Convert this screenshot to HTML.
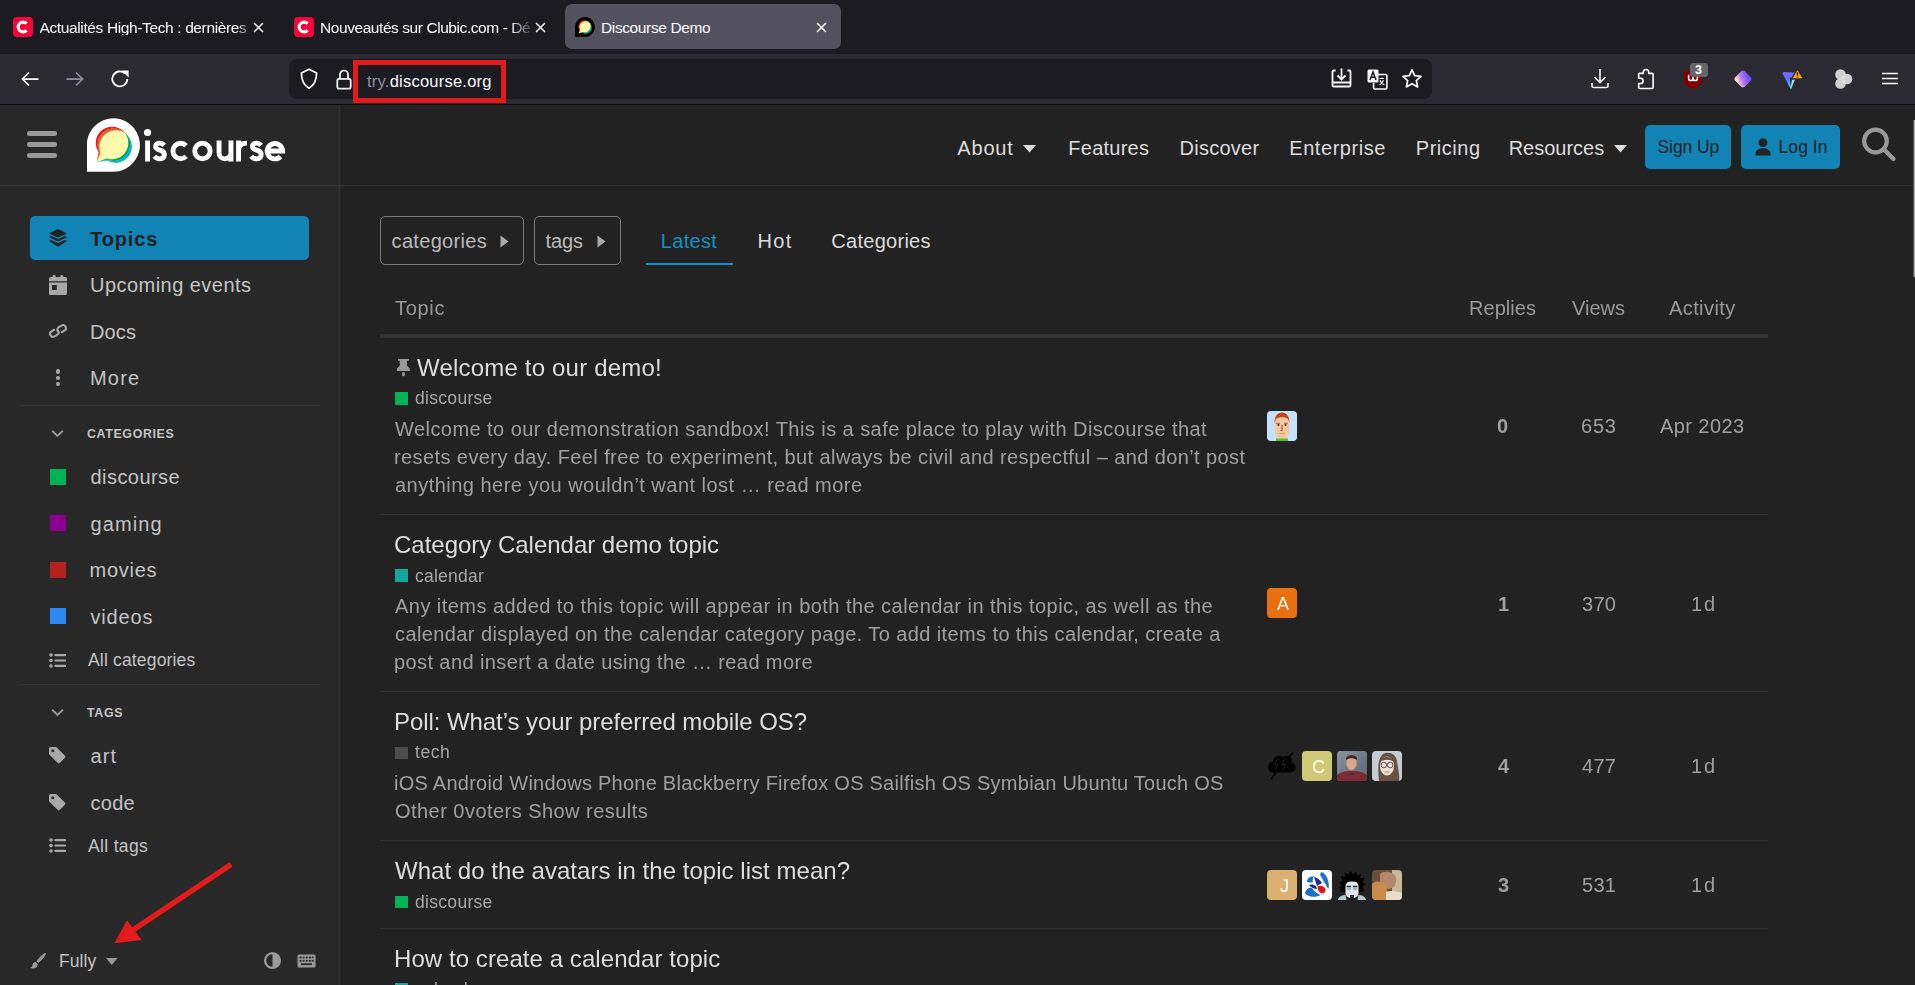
<!DOCTYPE html>
<html><head><meta charset="utf-8"><title>Discourse Demo</title>
<style>
html,body{margin:0;padding:0;}
body{width:1915px;height:985px;overflow:hidden;position:relative;background:#222;font-family:"Liberation Sans",sans-serif;}
svg{overflow:visible}
</style></head><body>
<div style="position:absolute;left:0px;top:0px;width:1915px;height:54px;background:#1c1b22;border-radius:0px;"></div>
<div style="position:absolute;left:0px;top:54px;width:1915px;height:50px;background:#2b2a33;border-radius:0px;"></div>
<div style="position:absolute;left:0px;top:104px;width:1915px;height:1px;background:#0c0c0d;border-radius:0px;"></div>
<div style="position:absolute;left:565px;top:4px;width:276px;height:45px;background:#53515e;border-radius:7px;"></div>
<svg style="position:absolute;left:13px;top:17px;" width="20" height="20" viewBox="0 0 20 20"><rect width="20" height="20" rx="4" fill="#f5053a"/><path d="M13.6 6.6 A4.9 4.9 0 1 0 13.6 13.4" fill="none" stroke="#fff" stroke-width="3.1"/></svg>
<svg style="position:absolute;left:294px;top:17px;" width="20" height="20" viewBox="0 0 20 20"><rect width="20" height="20" rx="4" fill="#f5053a"/><path d="M13.6 6.6 A4.9 4.9 0 1 0 13.6 13.4" fill="none" stroke="#fff" stroke-width="3.1"/></svg>
<div style="position:absolute;left:39.50px;top:19.87px;font-size:15.5px;line-height:15.5px;font-weight:400;color:#fbfbfe;letter-spacing:-0.373px;white-space:nowrap;-webkit-mask-image:linear-gradient(90deg,#000 0,#000 196px,rgba(0,0,0,0.25) 210px);">Actualités High-Tech : dernières</div>
<div style="position:absolute;left:320.00px;top:19.87px;font-size:15.5px;line-height:15.5px;font-weight:400;color:#fbfbfe;letter-spacing:-0.431px;white-space:nowrap;-webkit-mask-image:linear-gradient(90deg,#000 0,#000 190px,rgba(0,0,0,0.15) 212px);">Nouveautés sur Clubic.com - Dé</div>
<div style="position:absolute;left:601.00px;top:19.87px;font-size:15.5px;line-height:15.5px;font-weight:400;color:#fbfbfe;letter-spacing:-0.380px;white-space:nowrap;">Discourse Demo</div>
<svg style="position:absolute;left:253px;top:21.5px;" width="11" height="11" viewBox="0 0 11 11"><path d="M1 1L10 10M10 1L1 10" stroke="#fbfbfe" stroke-width="1.5" fill="none"/></svg>
<svg style="position:absolute;left:535px;top:21.5px;" width="11" height="11" viewBox="0 0 11 11"><path d="M1 1L10 10M10 1L1 10" stroke="#fbfbfe" stroke-width="1.5" fill="none"/></svg>
<svg style="position:absolute;left:816px;top:21.5px;" width="11" height="11" viewBox="0 0 11 11"><path d="M1 1L10 10M10 1L1 10" stroke="#fbfbfe" stroke-width="1.5" fill="none"/></svg>
<svg style="position:absolute;left:575px;top:17px;" width="20" height="20" viewBox="0 0 103 104"><path fill="#000" d="M51.87 0C23.71 0 0 22.83 0 51v52.81l51.86-.05c28.16 0 51-23.71 51-51.87S80 0 51.87 0z"/><path fill="#fff9ae" d="M52.37 19.74a31.62 31.62 0 0 0-27.79 46.67l-5.72 18.4 20.54-4.64a31.61 31.61 0 1 0 13-60.43z"/><path fill="#00aeef" d="M77.45 32.12a31.6 31.6 0 0 1-38.05 48L18.86 84.82l20.91-2.47A31.6 31.6 0 0 0 77.45 32.12z"/><path fill="#00a94f" d="M71.63 26.29A31.6 31.6 0 0 1 38.8 78L18.86 84.82 39.4 80.18a31.6 31.6 0 0 0 32.23-53.89z"/><path fill="#f15d22" d="M26.47 67.11a31.61 31.61 0 0 1 51-35A31.61 31.61 0 0 0 24.58 66.41l-5.72 18.4z"/><path fill="#e31b23" d="M24.58 66.41a31.61 31.61 0 0 1 47.05-40.12 31.61 31.61 0 0 0-49 39.63l-3.76 18.9z"/></svg>
<svg style="position:absolute;left:20px;top:70px;" width="20" height="18" viewBox="0 0 20 18"><path d="M18.5 9H2.5M9 2.5L2.5 9L9 15.5" stroke="#fbfbfe" stroke-width="1.75" fill="none"/></svg>
<svg style="position:absolute;left:65px;top:70px;" width="20" height="18" viewBox="0 0 20 18"><path d="M1.5 9H17.5M11 2.5L17.5 9L11 15.5" stroke="#8f8f9d" stroke-width="1.75" fill="none"/></svg>
<svg style="position:absolute;left:110px;top:69px;" width="20" height="20" viewBox="0 0 20 20"><path d="M17.3 10A7.5 7.5 0 1 1 14.8 4.3" stroke="#fbfbfe" stroke-width="1.8" fill="none"/><path d="M11.6 1.6H18.6V8.6Z" fill="#fbfbfe"/></svg>
<div style="position:absolute;left:289px;top:59px;width:1143px;height:40px;background:#1c1b22;border-radius:8px;"></div>
<svg style="position:absolute;left:299px;top:68px;" width="20" height="22" viewBox="0 0 20 22"><path d="M10 1.3L17.6 4.9C17.6 12 15.2 17 10 20.3C4.8 17 2.4 12 2.4 4.9Z" stroke="#fbfbfe" stroke-width="1.7" fill="none" stroke-linejoin="round"/></svg>
<svg style="position:absolute;left:335px;top:68px;" width="18" height="22" viewBox="0 0 18 22"><path d="M5 10.5V6.5A4 4 0 0 1 13 6.5V10.5" stroke="#fbfbfe" stroke-width="1.7" fill="none"/><rect x="2.3" y="10.9" width="13.4" height="9.8" rx="2" stroke="#fbfbfe" stroke-width="1.7" fill="none"/></svg>
<div style="position:absolute;left:367.00px;top:72.53px;font-size:16.5px;line-height:16.5px;font-weight:400;color:#fbfbfe;letter-spacing:0.234px;white-space:nowrap;"><span style="color:#8f8f9d">try.</span>discourse.org</div>
<div style="position:absolute;left:353px;top:60px;width:143px;height:33px;border:5px solid #e41b1b;"></div>
<svg style="position:absolute;left:1331px;top:68px;" width="22" height="21" viewBox="0 0 22 21"><path d="M4.5 2.5H2.8A1.3 1.3 0 0 0 1.5 3.8V17.2A1.3 1.3 0 0 0 2.8 18.5H18.2A1.3 1.3 0 0 0 19.5 17.2V3.8A1.3 1.3 0 0 0 18.2 2.5H16.5M1.5 14.5H19.5M10.5 0.5V11M6.5 7.5L10.5 11.5L14.5 7.5" stroke="#fbfbfe" stroke-width="1.8" fill="none"/></svg>
<svg style="position:absolute;left:1367px;top:69px;" width="21" height="21" viewBox="0 0 21 21"><rect x="0.5" y="0.5" width="11" height="13" rx="1.5" fill="#fbfbfe"/><path d="M3 11L6 3L9 11M4.2 8.2H7.8" stroke="#1c1b22" stroke-width="1.5" fill="none"/><path d="M10.5 5.5H18.7A1.2 1.2 0 0 1 19.9 6.7V18.8A1.2 1.2 0 0 1 18.7 20H7.8A1.2 1.2 0 0 1 6.6 18.8V14" stroke="#fbfbfe" stroke-width="1.6" fill="none"/><path d="M12.5 9.5H17M14.8 8.5V10M13 11.2C14 14 15.5 15 17.3 15.5M16.5 11.2C15.8 13.5 14.5 15 12.5 16" stroke="#fbfbfe" stroke-width="1.1" fill="none"/></svg>
<svg style="position:absolute;left:1401px;top:68px;" width="22" height="22" viewBox="0 0 22 22"><path d="M11 1.8L13.7 7.6L20 8.3L15.3 12.6L16.6 18.9L11 15.7L5.4 18.9L6.7 12.6L2 8.3L8.3 7.6Z" stroke="#fbfbfe" stroke-width="1.7" fill="none" stroke-linejoin="round"/></svg>
<svg style="position:absolute;left:1590px;top:68px;" width="20" height="21" viewBox="0 0 20 21"><path d="M10 1V14.5M4.5 9L10 14.5L15.5 9M2 15V18A1.5 1.5 0 0 0 3.5 19.5H16.5A1.5 1.5 0 0 0 18 18V15" stroke="#fbfbfe" stroke-width="1.6" fill="none"/></svg>
<svg style="position:absolute;left:1636px;top:68px;" width="20" height="22" viewBox="0 0 20 22"><path d="M7.3 5.4V4.2A2.7 2.7 0 0 1 12.7 4.2V5.4H16.2A0.9 0.9 0 0 1 17.1 6.3V19.6A0.9 0.9 0 0 1 16.2 20.5H3.6A0.9 0.9 0 0 1 2.7 19.6V15.5H4.5A2.6 2.6 0 0 0 4.5 10.3H2.7V6.3A0.9 0.9 0 0 1 3.6 5.4Z" stroke="#fbfbfe" stroke-width="1.6" fill="none" stroke-linejoin="round"/></svg>
<svg style="position:absolute;left:1683px;top:70px;" width="20" height="20" viewBox="0 0 20 20"><path d="M1 1.5L10 0.8L19 1.5V10.5C19 14 15.5 17 10 19C4.5 17 1 14 1 10.5Z" fill="#800000"/><path d="M5.6 4.8V8.4A2.2 2.2 0 0 0 10 8.4V7M10 8.4A2.2 2.2 0 0 0 14.4 8.4V6.5" stroke="#fff" stroke-width="1.5" fill="none"/></svg>
<div style="position:absolute;left:1690px;top:63px;width:18px;height:14px;background:#666;border-radius:3px;"></div>
<div style="position:absolute;left:1695.00px;top:64.41px;font-size:12.5px;line-height:12.5px;font-weight:700;color:#fff;letter-spacing:0.000px;white-space:nowrap;">3</div>
<svg style="position:absolute;left:1732px;top:68px;" width="22" height="22" viewBox="0 0 22 22"><defs><linearGradient id="gd" x1="0.7" y1="0.1" x2="0.3" y2="0.95"><stop offset="0" stop-color="#6e4cff"/><stop offset="0.55" stop-color="#b47be8"/><stop offset="1" stop-color="#ffe2cc"/></linearGradient></defs><rect x="4.2" y="4.2" width="13.6" height="13.6" rx="3" transform="rotate(45 11 11)" fill="url(#gd)"/></svg>
<svg style="position:absolute;left:1781px;top:68px;" width="24" height="22" viewBox="0 0 24 22"><defs><linearGradient id="gt" x1="0" y1="0" x2="0.35" y2="1"><stop offset="0" stop-color="#8a5cff"/><stop offset="0.55" stop-color="#4a7dff"/><stop offset="1" stop-color="#7fe9f5"/></linearGradient></defs><path d="M1.5 5.5Q1.3 4 3 4L16.5 4.8L10 21.5Z" fill="url(#gt)"/><path d="M10.8 10.5L14.5 10.8L9.5 20.5Z" fill="#b8f3f8" opacity="0.75"/><path d="M8.8 9.5L11.2 10.3L9.7 19.5Z" fill="#2b2a33"/><path d="M16.5 0.8L22.6 11H10.4Z" fill="#ff9f00" stroke="#2b2a33" stroke-width="1.3" stroke-linejoin="round"/><path d="M16.5 4.2V7.8M16.5 8.8V9.6" stroke="#2b2a33" stroke-width="1.3"/></svg>
<svg style="position:absolute;left:1833px;top:68px;" width="21" height="22" viewBox="0 0 21 22"><circle cx="7.5" cy="6.5" r="5.3" fill="#e0e0e0" opacity="0.92"/><circle cx="14" cy="11" r="5.3" fill="#e0e0e0" opacity="0.92"/><circle cx="7.5" cy="15.5" r="5.3" fill="#e0e0e0" opacity="0.92"/></svg>
<svg style="position:absolute;left:1881px;top:70px;" width="18" height="16" viewBox="0 0 18 16"><path d="M1 3.4H17M1 8.5H17M1 13.6H17" stroke="#fbfbfe" stroke-width="1.5"/></svg>
<div style="position:absolute;left:0px;top:105px;width:339px;height:880px;background:#282828;border-radius:0px;"></div>
<div style="position:absolute;left:339px;top:105px;width:1px;height:880px;background:#333333;border-radius:0px;"></div>
<div style="position:absolute;left:340px;top:105px;width:1575px;height:880px;background:#222222;border-radius:0px;"></div>
<div style="position:absolute;left:0px;top:185px;width:1913px;height:1px;background:#333333;border-radius:0px;"></div>
<div style="position:absolute;left:1913px;top:120px;width:1px;height:157px;background:#555;border-radius:0px;"></div>
<div style="position:absolute;left:1914px;top:120px;width:1px;height:157px;background:#a8a8a8;border-radius:0px;"></div>
<div style="position:absolute;left:26.6px;top:131.2px;width:30.6px;height:4.4px;background:#999;border-radius:2.2px;"></div>
<div style="position:absolute;left:26.6px;top:142.2px;width:30.6px;height:4.4px;background:#999;border-radius:2.2px;"></div>
<div style="position:absolute;left:26.6px;top:153.2px;width:30.6px;height:4.4px;background:#999;border-radius:2.2px;"></div>
<svg style="position:absolute;left:86.7px;top:117.7px;" width="53" height="54" viewBox="0 0 103 104"><path fill="#ffffff" d="M51.87 0C23.71 0 0 22.83 0 51v52.81l51.86-.05c28.16 0 51-23.71 51-51.87S80 0 51.87 0z"/><path fill="#fff9ae" d="M52.37 19.74a31.62 31.62 0 0 0-27.79 46.67l-5.72 18.4 20.54-4.64a31.61 31.61 0 1 0 13-60.43z"/><path fill="#00aeef" d="M77.45 32.12a31.6 31.6 0 0 1-38.05 48L18.86 84.82l20.91-2.47A31.6 31.6 0 0 0 77.45 32.12z"/><path fill="#00a94f" d="M71.63 26.29A31.6 31.6 0 0 1 38.8 78L18.86 84.82 39.4 80.18a31.6 31.6 0 0 0 32.23-53.89z"/><path fill="#f15d22" d="M26.47 67.11a31.61 31.61 0 0 1 51-35A31.61 31.61 0 0 0 24.58 66.41l-5.72 18.4z"/><path fill="#e31b23" d="M24.58 66.41a31.61 31.61 0 0 1 47.05-40.12 31.61 31.61 0 0 0-49 39.63l-3.76 18.9z"/></svg>
<svg style="position:absolute;left:140px;top:125px;" width="150" height="42" viewBox="0 0 150 42"><g transform="translate(-140 -125)" fill="none" stroke="#fff" stroke-width="4.9"><path d="M147.55 140.5V161.5"/><path d="M164.2 145.4C163 143.9 161.5 143.15 159.8 143.15C157.3 143.15 155.6 144.4 155.6 146.4C155.6 148.6 157.5 149.4 160 150.2C162.7 151 164.4 152.3 164.4 154.7C164.4 157.3 162.3 158.85 159.6 158.85C157.4 158.85 155.7 157.9 154.4 156.3"/><path d="M186.1 145.6A7.7 7.7 0 1 0 186.1 156.4"/><circle cx="202.45" cy="151" r="7.7"/><path d="M219.05 140.5V152.9A5.95 5.95 0 0 0 230.95 152.9V140.5M230.95 150V161.5"/><path d="M238.55 140.5V161.5M238.55 150.5C238.55 145.5 241.5 143.1 246.9 143.1"/><path d="M261 145.4C259.8 143.9 258.3 143.15 256.6 143.15C254.1 143.15 252.4 144.4 252.4 146.4C252.4 148.6 254.3 149.4 256.8 150.2C259.5 151 261.2 152.3 261.2 154.7C261.2 157.3 259.1 158.85 256.4 158.85C254.2 158.85 252.5 157.9 251.2 156.3"/><path d="M267.2 151H282.6A7.7 7.7 0 1 0 280.5 156.5"/></g><circle cx="7.55" cy="7.5" r="3.6" fill="#fff"/></svg>
<div style="position:absolute;left:957.30px;top:137.86px;font-size:20px;line-height:20px;font-weight:400;color:#dddddd;letter-spacing:0.823px;white-space:nowrap;">About</div>
<svg style="position:absolute;left:1022.5px;top:144.5px;" width="13" height="7.5" viewBox="0 0 13 7.5"><path d="M0 0H13L6.5 7.5Z" fill="#ddd"/></svg>
<div style="position:absolute;left:1068.30px;top:137.86px;font-size:20px;line-height:20px;font-weight:400;color:#dddddd;letter-spacing:0.253px;white-space:nowrap;">Features</div>
<div style="position:absolute;left:1179.60px;top:137.86px;font-size:20px;line-height:20px;font-weight:400;color:#dddddd;letter-spacing:0.252px;white-space:nowrap;">Discover</div>
<div style="position:absolute;left:1289.30px;top:137.86px;font-size:20px;line-height:20px;font-weight:400;color:#dddddd;letter-spacing:0.552px;white-space:nowrap;">Enterprise</div>
<div style="position:absolute;left:1415.80px;top:137.86px;font-size:20px;line-height:20px;font-weight:400;color:#dddddd;letter-spacing:0.515px;white-space:nowrap;">Pricing</div>
<div style="position:absolute;left:1508.70px;top:137.86px;font-size:20px;line-height:20px;font-weight:400;color:#dddddd;letter-spacing:-0.012px;white-space:nowrap;">Resources</div>
<svg style="position:absolute;left:1613.5px;top:144.5px;" width="13" height="7.5" viewBox="0 0 13 7.5"><path d="M0 0H13L6.5 7.5Z" fill="#ddd"/></svg>
<div style="position:absolute;left:1645px;top:125px;width:86px;height:44px;background:#1183b5;border-radius:5px;"></div>
<div style="position:absolute;left:1657.50px;top:139.18px;font-size:17.5px;line-height:17.5px;font-weight:400;color:#222;letter-spacing:-0.088px;white-space:nowrap;">Sign Up</div>
<div style="position:absolute;left:1741px;top:125px;width:99px;height:44px;background:#1183b5;border-radius:5px;"></div>
<svg style="position:absolute;left:1755px;top:138px;" width="16" height="18" viewBox="0 0 16 18"><circle cx="8" cy="4.6" r="4.4" fill="#222"/><path d="M0.3 17.5C0.3 12.5 3 10.3 8 10.3S15.7 12.5 15.7 17.5Z" fill="#222"/></svg>
<div style="position:absolute;left:1778.60px;top:139.18px;font-size:17.5px;line-height:17.5px;font-weight:400;color:#222;letter-spacing:0.036px;white-space:nowrap;">Log In</div>
<svg style="position:absolute;left:1860px;top:126px;" width="38" height="38" viewBox="0 0 38 38"><circle cx="15.5" cy="15" r="11.3" stroke="#999" stroke-width="4.2" fill="none"/><path d="M24 23.5L33.5 33" stroke="#999" stroke-width="4.4" stroke-linecap="round"/></svg>
<div style="position:absolute;left:30px;top:216px;width:279px;height:44px;background:#1183b5;border-radius:5px;"></div>
<svg style="position:absolute;left:49px;top:228px;" width="18" height="20" viewBox="0 0 18 20"><path d="M9 1L18 5.4L9 9.6L0 5.4Z" fill="#222"/><path d="M0 9L2.3 7.9L9 11.1L15.7 7.9L18 9L9 13.6Z" fill="#222"/><path d="M0 13L2.3 11.9L9 15.2L15.7 11.9L18 13L9 18.7Z" fill="#222"/></svg>
<div style="position:absolute;left:90.20px;top:229.06px;font-size:20px;line-height:20px;font-weight:700;color:#222;letter-spacing:0.831px;white-space:nowrap;">Topics</div>
<svg style="position:absolute;left:49px;top:274px;" width="18" height="22" viewBox="0 0 18 22"><path d="M0 5A2 2 0 0 1 2 3H16A2 2 0 0 1 18 5V7.2H0Z M0 8.6H18V19.5A1.5 1.5 0 0 1 16.5 21H1.5A1.5 1.5 0 0 1 0 19.5Z" fill="#a9a9a9"/><rect x="3.6" y="1" width="2.9" height="3.5" rx="1.2" fill="#a9a9a9"/><rect x="11.3" y="1" width="2.9" height="3.5" rx="1.2" fill="#a9a9a9"/><rect x="3" y="11" width="4.8" height="5" fill="#282828"/></svg>
<div style="position:absolute;left:90.00px;top:274.56px;font-size:20px;line-height:20px;font-weight:400;color:#c4c4c4;letter-spacing:0.463px;white-space:nowrap;">Upcoming events</div>
<svg style="position:absolute;left:48px;top:323px;" width="20" height="16" viewBox="0 0 20 16"><g transform="translate(10 8) scale(1.1) translate(-10 -8) rotate(-30 10 8)" stroke="#a9a9a9" stroke-width="1.85" fill="none" stroke-linecap="round"><path d="M7.6 5.3H4.8A2.7 2.7 0 0 0 4.8 10.7H7.6A2.7 2.7 0 0 0 10.3 8"/><path d="M12.4 10.7H15.2A2.7 2.7 0 0 0 15.2 5.3H12.4A2.7 2.7 0 0 0 9.7 8"/></g></svg>
<div style="position:absolute;left:90.00px;top:321.76px;font-size:20px;line-height:20px;font-weight:400;color:#c4c4c4;letter-spacing:0.145px;white-space:nowrap;">Docs</div>
<div style="position:absolute;left:55.5px;top:369.2px;width:4.6px;height:4.6px;border-radius:50%;background:#a9a9a9"></div>
<div style="position:absolute;left:55.5px;top:375.5px;width:4.6px;height:4.6px;border-radius:50%;background:#a9a9a9"></div>
<div style="position:absolute;left:55.5px;top:381.8px;width:4.6px;height:4.6px;border-radius:50%;background:#a9a9a9"></div>
<div style="position:absolute;left:90.00px;top:368.26px;font-size:20px;line-height:20px;font-weight:400;color:#c4c4c4;letter-spacing:1.186px;white-space:nowrap;">More</div>
<div style="position:absolute;left:20px;top:405px;width:300px;height:1px;background:#333;border-radius:0px;"></div>
<svg style="position:absolute;left:51px;top:428.5px;" width="13" height="9" viewBox="0 0 13 9"><path d="M1.2 1.8L6.5 7L11.8 1.8" stroke="#999" stroke-width="1.9" fill="none"/></svg>
<div style="position:absolute;left:87.00px;top:427.70px;font-size:12.4px;line-height:12.4px;font-weight:700;color:#c4c4c4;letter-spacing:0.640px;white-space:nowrap;">CATEGORIES</div>
<div style="position:absolute;left:50px;top:469px;width:16px;height:16px;background:#00b355;border-radius:0px;"></div>
<div style="position:absolute;left:90.50px;top:467.06px;font-size:20px;line-height:20px;font-weight:400;color:#c4c4c4;letter-spacing:0.441px;white-space:nowrap;">discourse</div>
<div style="position:absolute;left:50px;top:515px;width:16px;height:16px;background:#8c0090;border-radius:0px;"></div>
<div style="position:absolute;left:90.50px;top:514.06px;font-size:20px;line-height:20px;font-weight:400;color:#c4c4c4;letter-spacing:1.105px;white-space:nowrap;">gaming</div>
<div style="position:absolute;left:50px;top:562px;width:16px;height:16px;background:#b3221f;border-radius:0px;"></div>
<div style="position:absolute;left:89.50px;top:560.06px;font-size:20px;line-height:20px;font-weight:400;color:#c4c4c4;letter-spacing:0.730px;white-space:nowrap;">movies</div>
<div style="position:absolute;left:50px;top:608px;width:16px;height:16px;background:#2a88f0;border-radius:0px;"></div>
<div style="position:absolute;left:90.50px;top:606.76px;font-size:20px;line-height:20px;font-weight:400;color:#c4c4c4;letter-spacing:0.838px;white-space:nowrap;">videos</div>
<svg style="position:absolute;left:49px;top:653px;" width="18" height="15" viewBox="0 0 18 15"><circle cx="2" cy="2" r="1.8" fill="#a9a9a9"/><circle cx="2" cy="7.5" r="1.8" fill="#a9a9a9"/><circle cx="2" cy="13" r="1.8" fill="#a9a9a9"/><rect x="5.5" y="1" width="11.5" height="2.2" rx="0.6" fill="#a9a9a9"/><rect x="5.5" y="6.4" width="11.5" height="2.2" rx="0.6" fill="#a9a9a9"/><rect x="5.5" y="11.8" width="11.5" height="2.2" rx="0.6" fill="#a9a9a9"/></svg>
<div style="position:absolute;left:88.00px;top:652.18px;font-size:17.5px;line-height:17.5px;font-weight:400;color:#c4c4c4;letter-spacing:0.169px;white-space:nowrap;">All categories</div>
<div style="position:absolute;left:20px;top:684px;width:300px;height:1px;background:#333;border-radius:0px;"></div>
<svg style="position:absolute;left:51px;top:707.5px;" width="13" height="9" viewBox="0 0 13 9"><path d="M1.2 1.8L6.5 7L11.8 1.8" stroke="#999" stroke-width="1.9" fill="none"/></svg>
<div style="position:absolute;left:87.00px;top:707.00px;font-size:12.4px;line-height:12.4px;font-weight:700;color:#c4c4c4;letter-spacing:0.689px;white-space:nowrap;">TAGS</div>
<svg style="position:absolute;left:48.3px;top:746px;" width="18" height="18" viewBox="0 0 18 18"><path d="M1 2.5A1.5 1.5 0 0 1 2.5 1H8.2L16.8 9.6A1.6 1.6 0 0 1 16.8 11.9L11.9 16.8A1.6 1.6 0 0 1 9.6 16.8L1 8.2Z" fill="#a9a9a9"/><circle cx="4.8" cy="4.8" r="1.5" fill="#282828"/></svg>
<div style="position:absolute;left:90.50px;top:746.26px;font-size:20px;line-height:20px;font-weight:400;color:#c4c4c4;letter-spacing:1.108px;white-space:nowrap;">art</div>
<svg style="position:absolute;left:48.3px;top:792.5px;" width="18" height="18" viewBox="0 0 18 18"><path d="M1 2.5A1.5 1.5 0 0 1 2.5 1H8.2L16.8 9.6A1.6 1.6 0 0 1 16.8 11.9L11.9 16.8A1.6 1.6 0 0 1 9.6 16.8L1 8.2Z" fill="#a9a9a9"/><circle cx="4.8" cy="4.8" r="1.5" fill="#282828"/></svg>
<div style="position:absolute;left:90.50px;top:793.06px;font-size:20px;line-height:20px;font-weight:400;color:#c4c4c4;letter-spacing:0.251px;white-space:nowrap;">code</div>
<svg style="position:absolute;left:49px;top:838px;" width="18" height="15" viewBox="0 0 18 15"><circle cx="2" cy="2" r="1.8" fill="#a9a9a9"/><circle cx="2" cy="7.5" r="1.8" fill="#a9a9a9"/><circle cx="2" cy="13" r="1.8" fill="#a9a9a9"/><rect x="5.5" y="1" width="11.5" height="2.2" rx="0.6" fill="#a9a9a9"/><rect x="5.5" y="6.4" width="11.5" height="2.2" rx="0.6" fill="#a9a9a9"/><rect x="5.5" y="11.8" width="11.5" height="2.2" rx="0.6" fill="#a9a9a9"/></svg>
<div style="position:absolute;left:88.00px;top:837.98px;font-size:17.5px;line-height:17.5px;font-weight:400;color:#c4c4c4;letter-spacing:0.337px;white-space:nowrap;">All tags</div>
<svg style="position:absolute;left:29px;top:952px;" width="18" height="17" viewBox="0 0 18 17"><path d="M16.8 1.2C15.5 0.4 10 5.5 7.5 9.3L9.2 11C13 8.2 17.8 2 16.8 1.2Z" fill="#999"/><path d="M6.8 10C4.2 10 3.6 12 3.4 13.6C3.2 15 2.2 15.6 1 15.8C3.5 17 8.5 16.6 8.8 12.2Z" fill="#999"/></svg>
<div style="position:absolute;left:59.00px;top:952.68px;font-size:17.5px;line-height:17.5px;font-weight:400;color:#c4c4c4;letter-spacing:0.100px;white-space:nowrap;">Fully</div>
<svg style="position:absolute;left:106px;top:958px;" width="12" height="7" viewBox="0 0 12 7"><path d="M0 0H11.5L5.75 7Z" fill="#999"/></svg>
<svg style="position:absolute;left:263px;top:951px;" width="19" height="19" viewBox="0 0 19 19"><circle cx="9.5" cy="9.5" r="7.4" stroke="#999" stroke-width="2.3" fill="none"/><path d="M9.5 2.1A7.4 7.4 0 0 1 9.5 16.9Z" fill="#999"/></svg>
<svg style="position:absolute;left:297px;top:954px;" width="19" height="14" viewBox="0 0 19 14"><rect x="0.5" y="0.5" width="18" height="13" rx="1.5" fill="#999"/><g fill="#282828"><rect x="2.5" y="2.6" width="2" height="1.8"/><rect x="5.6" y="2.6" width="2" height="1.8"/><rect x="8.7" y="2.6" width="2" height="1.8"/><rect x="11.8" y="2.6" width="2" height="1.8"/><rect x="14.6" y="2.6" width="2" height="1.8"/><rect x="2.5" y="5.9" width="2" height="1.8"/><rect x="5.6" y="5.9" width="2" height="1.8"/><rect x="8.7" y="5.9" width="2" height="1.8"/><rect x="11.8" y="5.9" width="2" height="1.8"/><rect x="14.6" y="5.9" width="2" height="1.8"/><rect x="4" y="9.3" width="11" height="1.8"/></g></svg>
<svg style="position:absolute;left:100px;top:855px;" width="140" height="95" viewBox="0 0 140 95"><path d="M131 9.5L30 77" stroke="#e41b1b" stroke-width="5.5" fill="none"/><path d="M14.4 88.2L27 65.2L41.7 85Z" fill="#e41b1b"/></svg>
<div style="position:absolute;left:380px;top:216px;width:142px;height:47px;border:1px solid #7a7a7a;border-radius:5px"></div>
<div style="position:absolute;left:391.60px;top:231.06px;font-size:20px;line-height:20px;font-weight:400;color:#bbbbbb;letter-spacing:0.314px;white-space:nowrap;">categories</div>
<svg style="position:absolute;left:500px;top:235px;" width="9" height="13" viewBox="0 0 9 13"><path d="M0.5 0.5L8.5 6.5L0.5 12.5Z" fill="#aaa"/></svg>
<div style="position:absolute;left:534px;top:216px;width:85px;height:47px;border:1px solid #7a7a7a;border-radius:5px"></div>
<div style="position:absolute;left:545.40px;top:231.06px;font-size:20px;line-height:20px;font-weight:400;color:#bbbbbb;letter-spacing:-0.068px;white-space:nowrap;">tags</div>
<svg style="position:absolute;left:597px;top:235px;" width="9" height="13" viewBox="0 0 9 13"><path d="M0.5 0.5L8.5 6.5L0.5 12.5Z" fill="#aaa"/></svg>
<div style="position:absolute;left:660.80px;top:231.16px;font-size:20px;line-height:20px;font-weight:400;color:#1a8fc3;letter-spacing:0.295px;white-space:nowrap;">Latest</div>
<div style="position:absolute;left:646px;top:262.5px;width:87px;height:2.6px;background:#1a8fc3;border-radius:0px;"></div>
<div style="position:absolute;left:757.40px;top:231.16px;font-size:20px;line-height:20px;font-weight:400;color:#dddddd;letter-spacing:1.417px;white-space:nowrap;">Hot</div>
<div style="position:absolute;left:831.30px;top:231.16px;font-size:20px;line-height:20px;font-weight:400;color:#dddddd;letter-spacing:0.276px;white-space:nowrap;">Categories</div>
<div style="position:absolute;left:395.00px;top:298.06px;font-size:20px;line-height:20px;font-weight:400;color:#999999;letter-spacing:0.678px;white-space:nowrap;will-change:transform;">Topic</div>
<div style="position:absolute;left:1469.00px;top:298.06px;font-size:20px;line-height:20px;font-weight:400;color:#999999;letter-spacing:0.050px;white-space:nowrap;will-change:transform;">Replies</div>
<div style="position:absolute;left:1572.40px;top:298.06px;font-size:20px;line-height:20px;font-weight:400;color:#999999;letter-spacing:-0.022px;white-space:nowrap;will-change:transform;">Views</div>
<div style="position:absolute;left:1669.00px;top:298.06px;font-size:20px;line-height:20px;font-weight:400;color:#999999;letter-spacing:0.409px;white-space:nowrap;will-change:transform;">Activity</div>
<div style="position:absolute;left:380px;top:334px;width:1388px;height:4px;background:#333;border-radius:0px;"></div>
<svg style="position:absolute;left:396px;top:359px;" width="15" height="18" viewBox="0 0 15 18"><path d="M2 0H12.9V1.8H11V6.8L13.8 9.6V12H0.9V9.6L3.8 6.8V1.8H2Z" fill="#999"/><rect x="6.1" y="12.9" width="2.7" height="4.3" rx="1.2" fill="#999"/></svg>
<div style="position:absolute;left:417.00px;top:355.68px;font-size:24px;line-height:24px;font-weight:400;color:#dddddd;letter-spacing:0.193px;white-space:nowrap;will-change:transform;">Welcome to our demo!</div>
<div style="position:absolute;left:395px;top:392px;width:13px;height:13px;background:#00b355;border-radius:0px;"></div>
<div style="position:absolute;left:414.50px;top:390.38px;font-size:17.5px;line-height:17.5px;font-weight:400;color:#a8a8a8;letter-spacing:0.305px;white-space:nowrap;will-change:transform;">discourse</div>
<div style="position:absolute;left:395.00px;top:419.06px;font-size:20px;line-height:20px;font-weight:400;color:#a0a0a0;letter-spacing:0.442px;white-space:nowrap;will-change:transform;">Welcome to our demonstration sandbox! This is a safe place to play with Discourse that</div>
<div style="position:absolute;left:394.00px;top:447.06px;font-size:20px;line-height:20px;font-weight:400;color:#a0a0a0;letter-spacing:0.405px;white-space:nowrap;will-change:transform;">resets every day. Feel free to experiment, but always be civil and respectful – and don’t post</div>
<div style="position:absolute;left:395.00px;top:475.06px;font-size:20px;line-height:20px;font-weight:400;color:#a0a0a0;letter-spacing:0.477px;white-space:nowrap;will-change:transform;">anything here you wouldn’t want lost … read more</div>
<div style="position:absolute;left:380px;top:513.5px;width:1388px;height:1px;background:#333;border-radius:0px;"></div>
<div style="position:absolute;left:394.30px;top:532.88px;font-size:24px;line-height:24px;font-weight:400;color:#dddddd;letter-spacing:-0.015px;white-space:nowrap;will-change:transform;">Category Calendar demo topic</div>
<div style="position:absolute;left:395px;top:569px;width:13px;height:13px;background:#12a89d;border-radius:0px;"></div>
<div style="position:absolute;left:414.50px;top:567.98px;font-size:17.5px;line-height:17.5px;font-weight:400;color:#a8a8a8;letter-spacing:0.243px;white-space:nowrap;will-change:transform;">calendar</div>
<div style="position:absolute;left:395.00px;top:596.06px;font-size:20px;line-height:20px;font-weight:400;color:#a0a0a0;letter-spacing:0.458px;white-space:nowrap;will-change:transform;">Any items added to this topic will appear in both the calendar in this topic, as well as the</div>
<div style="position:absolute;left:395.00px;top:624.06px;font-size:20px;line-height:20px;font-weight:400;color:#a0a0a0;letter-spacing:0.400px;white-space:nowrap;will-change:transform;">calendar displayed on the calendar category page. To add items to this calendar, create a</div>
<div style="position:absolute;left:394.00px;top:651.56px;font-size:20px;line-height:20px;font-weight:400;color:#a0a0a0;letter-spacing:0.402px;white-space:nowrap;will-change:transform;">post and insert a date using the … read more</div>
<div style="position:absolute;left:380px;top:691px;width:1388px;height:1px;background:#333;border-radius:0px;"></div>
<div style="position:absolute;left:394.00px;top:709.78px;font-size:24px;line-height:24px;font-weight:400;color:#dddddd;letter-spacing:-0.073px;white-space:nowrap;will-change:transform;">Poll: What’s your preferred mobile OS?</div>
<div style="position:absolute;left:395px;top:746.5px;width:13px;height:12px;background:#4d4d4d;border-radius:0px;"></div>
<div style="position:absolute;left:414.50px;top:744.48px;font-size:17.5px;line-height:17.5px;font-weight:400;color:#a8a8a8;letter-spacing:0.552px;white-space:nowrap;will-change:transform;">tech</div>
<div style="position:absolute;left:394.00px;top:773.06px;font-size:20px;line-height:20px;font-weight:400;color:#a0a0a0;letter-spacing:0.250px;white-space:nowrap;will-change:transform;">iOS Android Windows Phone Blackberry Firefox OS Sailfish OS Symbian Ubuntu Touch OS</div>
<div style="position:absolute;left:395.00px;top:800.86px;font-size:20px;line-height:20px;font-weight:400;color:#a0a0a0;letter-spacing:0.460px;white-space:nowrap;will-change:transform;">Other 0voters Show results</div>
<div style="position:absolute;left:380px;top:840px;width:1388px;height:1px;background:#333;border-radius:0px;"></div>
<div style="position:absolute;left:395.00px;top:858.98px;font-size:24px;line-height:24px;font-weight:400;color:#dddddd;letter-spacing:0.035px;white-space:nowrap;will-change:transform;">What do the avatars in the topic list mean?</div>
<div style="position:absolute;left:395px;top:895.5px;width:13px;height:12.5px;background:#00b355;border-radius:0px;"></div>
<div style="position:absolute;left:414.50px;top:893.98px;font-size:17.5px;line-height:17.5px;font-weight:400;color:#a8a8a8;letter-spacing:0.305px;white-space:nowrap;will-change:transform;">discourse</div>
<div style="position:absolute;left:380px;top:928px;width:1388px;height:1px;background:#333;border-radius:0px;"></div>
<div style="position:absolute;left:394.00px;top:946.68px;font-size:24px;line-height:24px;font-weight:400;color:#dddddd;letter-spacing:0.070px;white-space:nowrap;will-change:transform;">How to create a calendar topic</div>
<div style="position:absolute;left:395px;top:983px;width:13px;height:2px;background:#12a89d;border-radius:0px;"></div>
<div style="position:absolute;left:414.50px;top:981.48px;font-size:17.5px;line-height:17.5px;font-weight:400;color:#a8a8a8;letter-spacing:0.243px;white-space:nowrap;will-change:transform;">calendar</div>
<div style="position:absolute;left:1497.00px;top:416.36px;font-size:20px;line-height:20px;font-weight:700;color:#a0a0a0;letter-spacing:0.000px;white-space:nowrap;will-change:transform;">0</div>
<div style="position:absolute;left:1581.00px;top:416.36px;font-size:20px;line-height:20px;font-weight:400;color:#a0a0a0;letter-spacing:0.777px;white-space:nowrap;will-change:transform;">653</div>
<div style="position:absolute;left:1660.00px;top:416.36px;font-size:20px;line-height:20px;font-weight:400;color:#a0a0a0;letter-spacing:0.422px;white-space:nowrap;will-change:transform;">Apr 2023</div>
<div style="position:absolute;left:1497.60px;top:594.06px;font-size:20px;line-height:20px;font-weight:700;color:#a0a0a0;letter-spacing:0.000px;white-space:nowrap;will-change:transform;">1</div>
<div style="position:absolute;left:1582.00px;top:594.06px;font-size:20px;line-height:20px;font-weight:400;color:#a0a0a0;letter-spacing:0.277px;white-space:nowrap;will-change:transform;">370</div>
<div style="position:absolute;left:1690.50px;top:594.06px;font-size:20px;line-height:20px;font-weight:400;color:#a0a0a0;letter-spacing:1.877px;white-space:nowrap;will-change:transform;">1d</div>
<div style="position:absolute;left:1497.50px;top:756.26px;font-size:20px;line-height:20px;font-weight:700;color:#a0a0a0;letter-spacing:0.000px;white-space:nowrap;will-change:transform;">4</div>
<div style="position:absolute;left:1582.00px;top:756.26px;font-size:20px;line-height:20px;font-weight:400;color:#a0a0a0;letter-spacing:0.277px;white-space:nowrap;will-change:transform;">477</div>
<div style="position:absolute;left:1690.50px;top:756.26px;font-size:20px;line-height:20px;font-weight:400;color:#a0a0a0;letter-spacing:1.877px;white-space:nowrap;will-change:transform;">1d</div>
<div style="position:absolute;left:1497.50px;top:875.26px;font-size:20px;line-height:20px;font-weight:700;color:#a0a0a0;letter-spacing:0.000px;white-space:nowrap;will-change:transform;">3</div>
<div style="position:absolute;left:1582.00px;top:875.26px;font-size:20px;line-height:20px;font-weight:400;color:#a0a0a0;letter-spacing:0.277px;white-space:nowrap;will-change:transform;">531</div>
<div style="position:absolute;left:1690.50px;top:875.26px;font-size:20px;line-height:20px;font-weight:400;color:#a0a0a0;letter-spacing:1.877px;white-space:nowrap;will-change:transform;">1d</div>
<svg style="position:absolute;left:1267px;top:411px;" width="30" height="30" viewBox="0 0 30 30"><clipPath id="c1"><rect width="30" height="30" rx="4"/></clipPath><g clip-path="url(#c1)"><rect width="30" height="30" fill="#c6e1fb"/><path d="M8 12C8 5 11 2 15 2S22 5 22 12V20C22 24 19 28 15 28S8 24 8 20Z" fill="#f6c89a"/><path d="M7.5 12C7.5 5 10.5 1.5 15 1.5S22.5 5 22.5 12L21 8C19 5.5 11 5.5 9 8Z" fill="#c54618"/><path d="M9 12.5H13M17 12.5H21" stroke="#c9714a" stroke-width="1.3"/><circle cx="11.5" cy="14" r="0.9" fill="#222"/><circle cx="18.5" cy="14" r="0.9" fill="#222"/><path d="M15 14V19.5H13.5" stroke="#8a4a2a" stroke-width="1" fill="none"/><path d="M12 22.5H18" stroke="#c9a080" stroke-width="1.2"/><rect x="9" y="27.5" width="12" height="3" fill="#55c020"/></g></svg>
<div style="position:absolute;left:1267px;top:588px;width:30px;height:30px;border-radius:4px;background:#e8700f"></div>
<div style="position:absolute;left:1276.50px;top:594.76px;font-size:18px;line-height:18px;font-weight:400;color:#fff;letter-spacing:0.000px;white-space:nowrap;will-change:transform;">A</div>
<svg style="position:absolute;left:1267px;top:751px;" width="30" height="30" viewBox="0 0 30 30"><g fill="#000"><circle cx="6.5" cy="16" r="5.5"/><circle cx="12" cy="10.5" r="5.8"/><circle cx="19.5" cy="10" r="5.3"/><circle cx="23.5" cy="16.5" r="5"/><rect x="6" y="12" width="18" height="9.5"/></g><path d="M26 1.5L15 14L3.5 28.5" stroke="#000" stroke-width="1.4" fill="none"/><path d="M11 6.5L7.5 13H11L8.5 19M18.5 7L15 13.5H18.5L16 19.5" stroke="#222" stroke-width="1" fill="none"/></svg>
<div style="position:absolute;left:1302px;top:751px;width:30px;height:30px;border-radius:4px;background:#d1c976"></div>
<div style="position:absolute;left:1311.50px;top:757.76px;font-size:18px;line-height:18px;font-weight:400;color:#fff;letter-spacing:0.000px;white-space:nowrap;will-change:transform;">C</div>
<svg style="position:absolute;left:1337px;top:751px;" width="30" height="30" viewBox="0 0 30 30"><clipPath id="c3"><rect width="30" height="30" rx="4"/></clipPath><g clip-path="url(#c3)"><rect width="30" height="30" fill="#7d8793"/><rect width="30" height="30" fill="url(#gph)"/><defs><linearGradient id="gph" x1="0" y1="0" x2="1" y2="1"><stop offset="0" stop-color="#8a949f"/><stop offset="1" stop-color="#5a6570"/></linearGradient></defs><path d="M0 30V24C4 21 8 20 15 20S26 21 30 24V30Z" fill="#7b2a36"/><ellipse cx="14.5" cy="12" rx="5.2" ry="7" fill="#d9a88c"/><path d="M9 8C9 3 20 3 20 8L19.5 9C17 6.5 12 6.5 9.5 9Z" fill="#3a2a22"/><path d="M12.5 23L15 21.5L17.5 23L15 24Z" fill="#333"/></g></svg>
<svg style="position:absolute;left:1372px;top:751px;" width="30" height="30" viewBox="0 0 30 30"><clipPath id="c4"><rect width="30" height="30" rx="4"/></clipPath><g clip-path="url(#c4)"><rect width="30" height="30" fill="#c3ccd3"/><path d="M7 30C6 20 5 8 11 3C16 0 24 2 25 10C26 18 28 25 27 30Z" fill="#6b5143"/><ellipse cx="15" cy="15" rx="7" ry="9.5" fill="#eee2d8"/><path d="M8 9C11 5 18 5 22 9L22 11C18 8 12 8 8 11Z" fill="#6b5143"/><circle cx="11.8" cy="14" r="2.8" stroke="#444" stroke-width="0.9" fill="none"/><circle cx="18.2" cy="14" r="2.8" stroke="#444" stroke-width="0.9" fill="none"/><path d="M12.5 21H17.5" stroke="#b07a70" stroke-width="0.9"/></g></svg>
<div style="position:absolute;left:1267px;top:870px;width:30px;height:30px;border-radius:4px;background:#dcb070"></div>
<div style="position:absolute;left:1279.50px;top:876.76px;font-size:18px;line-height:18px;font-weight:400;color:#fff;letter-spacing:0.000px;white-space:nowrap;will-change:transform;">J</div>
<svg style="position:absolute;left:1302px;top:870px;" width="30" height="30" viewBox="0 0 30 30"><clipPath id="c5"><rect width="30" height="30" rx="4"/></clipPath><g clip-path="url(#c5)"><rect width="30" height="30" fill="#fff"/><path d="M19 2C25 3 28 13 26.5 19C24 16 21 9 18 5Z" fill="#1a73c6"/><path d="M5 12C5 8 8 6 12 6.5C11 8 10.5 10 10.8 12.5C8.5 12.5 6.5 12.5 5 12Z" fill="#1a73c6"/><path d="M3 23C4 19 7 17 10 18C12 21 15 24 19 25C13 28 5 27 3 23Z" fill="#1a73c6"/><path d="M12 7C15 7.5 18 10 20 13L15 16C14 13 13 10 12 7Z" fill="#1e2a8c"/><path d="M7 15C9 14 12 14.5 14 16L15 19C12 19 9 17.5 7 15Z" fill="#1e2a8c"/><path d="M15.5 16.5C18 15 22 16 23.5 19C24 22 22 24 19.5 23.5C17 22.5 15.5 19.5 15.5 16.5Z" fill="#e3141c"/></g></svg>
<svg style="position:absolute;left:1337px;top:870px;" width="30" height="30" viewBox="0 0 30 30"><path d="M4 22L2.5 17L5 16L2 12L5.5 11L4 6L8 7L8 2.5L11.5 5L13.5 1L16 4.5L19 1.5L20 5.5L24 3.5L23.5 8L27.5 8L25.5 12L28.5 14L25.5 16.5L27.5 20L24 22Z" fill="#000"/><path d="M8.5 17C8.5 12.5 11 11.5 15 11.5S21.5 12.5 21.5 17V23C21.5 26 19 28 15 28S8.5 26 8.5 23Z" fill="#dfe8ea"/><path d="M9.5 16.5H14M16 16.5H20.5" stroke="#333" stroke-width="1.3"/><circle cx="12" cy="18.5" r="1.8" fill="#8fb4c0"/><circle cx="18" cy="18.5" r="1.8" fill="#8fb4c0"/><path d="M13 25H17V28H13Z" fill="#222"/><path d="M0.5 30C2.5 26 5.5 25 8.5 25L9.5 30ZM29.5 30C27.5 26 24.5 25 21.5 25L20.5 30Z" fill="#b7c8cc"/></svg>
<svg style="position:absolute;left:1372px;top:870px;" width="30" height="30" viewBox="0 0 30 30"><clipPath id="c6"><rect width="30" height="30" rx="4"/></clipPath><g clip-path="url(#c6)"><rect width="30" height="30" fill="#6a5038"/><rect x="20" y="0" width="10" height="30" fill="#c8b89a"/><path d="M8 4C12 0 22 1 24 8C25 14 22 18 17 19C12 19 8 15 8 10Z" fill="#b5876a"/><path d="M0 14C4 10 10 11 14 16C16 20 16 26 14 30H0Z" fill="#c98a4a"/><path d="M14 22C18 20 24 21 30 23V30H14Z" fill="#e8dccc"/></g></svg>
</body></html>
